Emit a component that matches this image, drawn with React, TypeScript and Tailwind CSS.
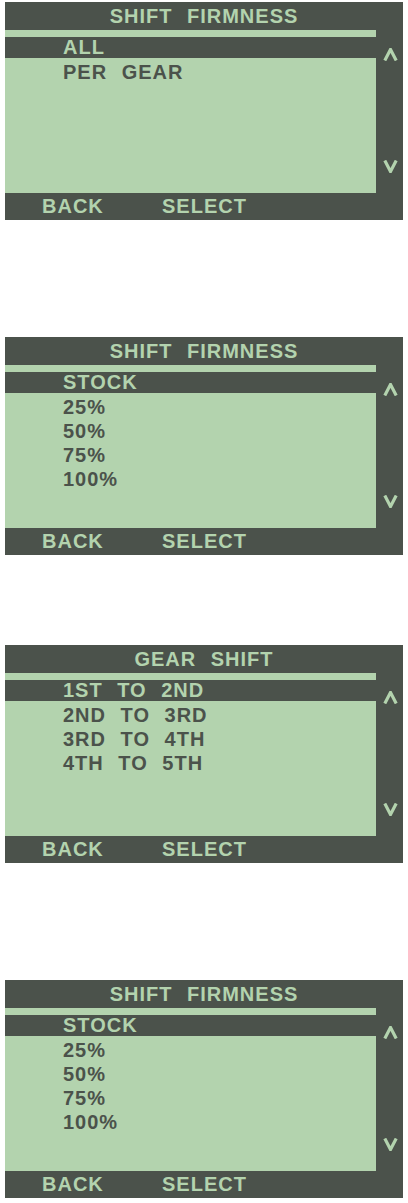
import React from "react";

const DARK = "bg-[#4b524b]";

type Screen = {
  title: string;
  items: string[];
  gapAfter: string;
};

const screens: Screen[] = [
  { title: "SHIFT FIRMNESS", items: ["ALL", "PER GEAR"], gapAfter: "mb-[117px]" },
  { title: "SHIFT FIRMNESS", items: ["STOCK", "25%", "50%", "75%", "100%"], gapAfter: "mb-[90px]" },
  { title: "GEAR SHIFT", items: ["1ST TO 2ND", "2ND TO 3RD", "3RD TO 4TH", "4TH TO 5TH"], gapAfter: "mb-[117px]" },
  { title: "SHIFT FIRMNESS", items: ["STOCK", "25%", "50%", "75%", "100%"], gapAfter: "mb-0" },
];

const UpArrow = () => (
  <svg width="15" height="13" viewBox="0 0 15 13" className="ml-[7px]">
    <polyline
      points="1.8,12.5 7.5,1.5 13.2,12.5"
      fill="none"
      stroke="#b3d3ae"
      strokeWidth="3.2"
      strokeLinejoin="miter"
    />
  </svg>
);

const DownArrow = () => (
  <svg width="15" height="13" viewBox="0 0 15 13" className="ml-[7px]">
    <polyline
      points="1.8,0.5 7.5,11.5 13.2,0.5"
      fill="none"
      stroke="#b3d3ae"
      strokeWidth="3.2"
      strokeLinejoin="miter"
    />
  </svg>
);

const LcdScreen = ({ screen }: { screen: Screen }) => {
  const [selected, ...rest] = screen.items;
  return (
    <div className={`w-[398px] ml-[5px] ${DARK} ${screen.gapAfter}`}>
      {/* Title */}
      <div className="h-[28px] leading-[28px] text-center text-[#b3d3ae]">{screen.title}</div>

      {/* Menu list + scroll column */}
      <div className="flex">
        <div className="w-[371px] flex flex-col">
          <div className="h-[7px] bg-[#b3d3ae]" />
          <div className="h-[21px] leading-[21px] pl-[58px] text-[#b3d3ae]">{selected}</div>
          <div className="h-[135px] bg-[#b3d3ae] pt-[2px] pl-[58px] text-[#4b524b]">
            {rest.map((item) => (
              <div key={item} className="h-[24px] leading-[24px]">
                {item}
              </div>
            ))}
          </div>
        </div>
        <div className="flex-1 flex flex-col justify-between pt-[18px] pb-[20px]">
          <UpArrow />
          <DownArrow />
        </div>
      </div>

      {/* Soft keys */}
      <div className="h-[27px] leading-[27px] flex text-[#b3d3ae]">
        <span className="ml-[37px] w-[120px]">BACK</span>
        <span>SELECT</span>
      </div>
    </div>
  );
};

export default function App() {
  return (
    <div className="w-[408px] h-[1203px] bg-white pt-[2px] font-['Liberation_Sans',Arial,sans-serif] font-bold text-[20px] tracking-[1px] [word-spacing:8px]">
      {screens.map((s, i) => (
        <LcdScreen key={i} screen={s} />
      ))}
    </div>
  );
}
